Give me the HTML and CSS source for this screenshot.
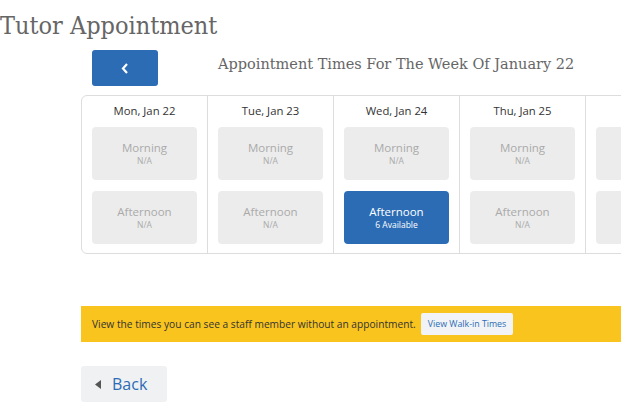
FILE: index.html
```html
<!DOCTYPE html>
<html>
<head>
<meta charset="utf-8">
<link rel="stylesheet" href="styles.css">
</head>
<body>
<div class="page">
  <h1 class="title">Tutor Appointment</h1>
  <div class="week-nav">
    <button class="prev-btn" aria-label="Previous week">
      <svg width="8" height="11" viewBox="0 0 8 11"><path d="M6 1 L2 5.5 L6 10" fill="none" stroke="#fff" stroke-width="2.2"/></svg>
    </button>
    <h2 class="week-title">Appointment Times For The Week Of January 22</h2>
  </div>
  <div class="calendar">
    <div class="day">
      <div class="day-name">Mon, Jan 22</div>
      <div class="slot"><span class="slot-name">Morning</span><span class="slot-info">N/A</span></div>
      <div class="slot"><span class="slot-name">Afternoon</span><span class="slot-info">N/A</span></div>
    </div>
    <div class="day">
      <div class="day-name">Tue, Jan 23</div>
      <div class="slot"><span class="slot-name">Morning</span><span class="slot-info">N/A</span></div>
      <div class="slot"><span class="slot-name">Afternoon</span><span class="slot-info">N/A</span></div>
    </div>
    <div class="day">
      <div class="day-name">Wed, Jan 24</div>
      <div class="slot"><span class="slot-name">Morning</span><span class="slot-info">N/A</span></div>
      <div class="slot available"><span class="slot-name">Afternoon</span><span class="slot-info">6 Available</span></div>
    </div>
    <div class="day">
      <div class="day-name">Thu, Jan 25</div>
      <div class="slot"><span class="slot-name">Morning</span><span class="slot-info">N/A</span></div>
      <div class="slot"><span class="slot-name">Afternoon</span><span class="slot-info">N/A</span></div>
    </div>
    <div class="day">
      <div class="day-name">Fri, Jan 26</div>
      <div class="slot"><span class="slot-name">Morning</span><span class="slot-info">N/A</span></div>
      <div class="slot"><span class="slot-name">Afternoon</span><span class="slot-info">N/A</span></div>
    </div>
  </div>
  <div class="walkin">
    <span class="walkin-text">View the times you can see a staff member without an appointment.</span>
    <button class="walkin-btn">View Walk-in Times</button>
  </div>
  <button class="back-btn">
    <svg width="7" height="9" viewBox="0 0 7 9"><path d="M6 0 L0 4.5 L6 9 Z" fill="#555"/></svg>
    <span>Back</span>
  </button>
</div>
</body>
</html>
```

FILE: styles.css
```css
html, body {
  margin: 0;
  padding: 0;
  overflow: hidden;
  background: #fff;
}
body {
  font-family: "Open Sans", "Liberation Sans", sans-serif;
  color: #333;
}
.page {
  width: 900px;
}
.title {
  margin: 0;
  padding: 9px 0 0 0;
  font-family: "DejaVu Serif Condensed", "DejaVu Serif", serif;
  font-stretch: condensed;
  font-weight: normal;
  font-size: 25px;
  line-height: 34px;
  color: #666;
}
.week-nav {
  display: flex;
  align-items: center;
  margin: 7px 0 0 92px;
  gap: 60px;
}
.prev-btn {
  width: 66px;
  height: 36px;
  border: none;
  border-radius: 3px;
  background: #2b6cb5;
  display: flex;
  align-items: center;
  justify-content: center;
  padding: 0;
}
.week-title {
  margin: 0;
  font-family: "DejaVu Serif", "Liberation Serif", serif;
  font-weight: normal;
  font-size: 14.5px;
  color: #666;
  position: relative;
  top: -4px;
}
.calendar {
  display: flex;
  margin: 9px 0 0 81px;
  border: 1px solid #ddd;
  border-radius: 6px;
  width: 700px;
}
.day {
  width: 105px;
  padding: 0 10px 9px 10px;
  border-right: 1px solid #ddd;
  display: flex;
  flex-direction: column;
  gap: 11px;
}
.day-name {
  height: 20px;
  padding-top: 7px;
  margin-bottom: -7px;
  text-align: center;
  font-size: 11.3px;
  line-height: 16px;
  color: #333;
}
.slot {
  height: 53px;
  border-radius: 4px;
  background: #ececec;
  display: flex;
  flex-direction: column;
  align-items: center;
  justify-content: center;
  color: #aaa;
}
.slot-name {
  font-size: 11.5px;
  line-height: 14px;
}
.slot-info {
  font-size: 8.5px;
  line-height: 11px;
}
.slot.available {
  background: #2b6cb5;
  color: #fff;
}
.walkin {
  display: flex;
  align-items: center;
  margin: 52px 0 0 81px;
  height: 36px;
  padding-left: 11px;
  background: #f9c41e;
  gap: 5px;
}
.walkin-text {
  font-size: 10.2px;
  color: #333;
}
.walkin-btn {
  height: 22px;
  padding: 0 7px;
  border: none;
  border-radius: 2px;
  background: #f1f3f6;
  color: #2b6cb5;
  font-family: "Open Sans", sans-serif;
  font-size: 8.8px;
}
.back-btn {
  display: flex;
  align-items: center;
  gap: 10px;
  margin: 24px 0 0 81px;
  width: 86px;
  height: 36px;
  padding: 0 0 0 14px;
  border: none;
  border-radius: 3px;
  background: #f0f1f3;
  color: #2b6cb5;
  font-family: "Open Sans", sans-serif;
  font-size: 16px;
}
```
